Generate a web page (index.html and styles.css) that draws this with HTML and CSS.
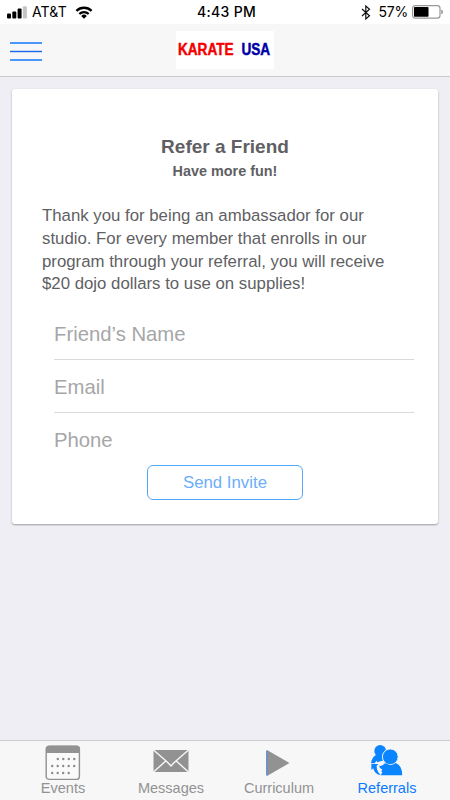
FILE: index.html
```html
<!DOCTYPE html>
<html lang="en">
<head>
<meta charset="utf-8">
<title>Refer a Friend</title>
<link rel="stylesheet" href="styles.css">
</head>
<body>
<div class="app">
  <header class="status">
    <div class="status-left">
      <svg class="signal" width="20" height="14" viewBox="0 0 20 14"><rect x="0" y="8.5" width="4" height="5" rx="1"/><rect x="5.3" y="6.5" width="4" height="7" rx="1"/><rect x="10.6" y="3.5" width="4" height="10" rx="1"/><rect x="15.9" y="1.3" width="4" height="12.2" rx="1" fill="#c4c4c4"/></svg>
      <span class="carrier">AT&amp;T</span>
      <svg width="18" height="13" viewBox="0 0 18 13" fill="none" stroke="#000" stroke-width="2.3"><path d="M1.4 4.9a10.8 10.8 0 0 1 15.2 0M4.3 8a6.7 6.7 0 0 1 9.4 0"/><path d="M6.2 9.9a4 4 0 0 1 5.6 0L9 12.7z" fill="#000" stroke="none"/></svg>
    </div>
    <span class="time">4:43 PM</span>
    <div class="status-right">
      <svg width="10" height="15" viewBox="0 0 10 15" fill="none" stroke="#111" stroke-width="1.2"><path d="M1 4l7.5 6.8L4.8 14V1l3.7 3.2L1 11"/></svg>
      <span class="percent">57%</span>
      <svg width="31" height="14" viewBox="0 0 31 14"><rect x=".6" y=".6" width="27.4" height="12.6" rx="2.6" fill="#fff" stroke="#999" stroke-width="1.2"/><rect x="2" y="2" width="14.5" height="9.7" rx=".8"/><path d="M29.3 4.6q1.6.5 1.6 2.4t-1.6 2.4z" fill="#888"/></svg>
    </div>
  </header>
  <nav class="navbar">
    <svg class="menu" width="32" height="20" viewBox="0 0 32 20"><path d="M0 1h32M0 18h32" stroke="#4a96fb" stroke-width="2"/><path d="M0 9.5h32" stroke="#1767e8" stroke-width="1.4"/></svg>
    <div class="logo">
      <svg width="98" height="38" viewBox="0 0 98 38"><text class="logo-text" transform="translate(2 24.4) scale(.8 1)" fill="#f50000" stroke="#f50000">KARATE</text><text class="logo-text" transform="translate(65.5 24.4) scale(.8 1)" fill="#0000a8" stroke="#0000a8">USA</text></svg>
    </div>
  </nav>
  <main class="content">
    <section class="card">
      <h1>Refer a Friend</h1>
      <h2>Have more fun!</h2>
      <p>Thank you for being an ambassador for our<br>studio. For every member that enrolls in our<br>program through your referral, you will receive<br>$20 dojo dollars to use on supplies!</p>
      <div class="fields">
        <div class="field">Friend’s Name</div>
        <div class="field">Email</div>
        <div class="field">Phone</div>
      </div>
      <button class="send">Send Invite</button>
    </section>
  </main>
  <footer class="tabs">
    <div class="tab">
      <svg width="36" height="36" viewBox="0 0 36 36"><rect x="1.2" y="1.2" width="33.2" height="33.2" rx="3" fill="#fafafa" stroke="#929292" stroke-width="1.4"/><path d="M1 8V4q0-3.2 3.2-3.2h27.4q3.2 0 3.2 3.2v4z" fill="#929292"/><path d="M12.8 14h18M7.2 21h24M7.2 28h18" stroke="#8b8b8b" stroke-width="2.4" stroke-linecap="round" stroke-dasharray="0 5.5"/></svg>
      <span>Events</span>
    </div>
    <div class="tab">
      <svg width="36" height="36" viewBox="0 0 36 36"><rect x=".5" y="5" width="35" height="22" fill="#929292"/><path d="M.5 5l14 12.2L18 21l3.5-3.8L35.5 5M.5 27l12.5-11.2M35.5 27L23 15.8" fill="none" stroke="#f8f8f8" stroke-width="1.4"/></svg>
      <span>Messages</span>
    </div>
    <div class="tab">
      <svg width="36" height="36" viewBox="0 0 36 36"><path d="M6 5l22.5 13L6 31z" fill="#929292"/><path d="M5.7 5.5v25" stroke="#3e7edb" stroke-width="1"/></svg>
      <span>Curriculum</span>
    </div>
    <div class="tab active">
      <svg width="36" height="36" viewBox="0 0 36 36" fill="#0a84ff"><circle cx="11.2" cy="6" r="5.9"/><path d="M6.5 10.2Q2.8 12.5 2 18.3l3.8-.1 1.6-2.4.8 1.4 6.8-2V10z"/><circle cx="21.3" cy="11.8" r="7.9" stroke="#f7f7f7" stroke-width="1"/><path d="M11.8 30.2l1.6-3.2-1.2-.8 1.1-1.8q-2.8-.8-3.4-3.6 3.2.8 5.8-2.3l1.4-.3Q21.5 21.8 26.8 18q6.4 2.4 6.4 12.2z"/><path d="M2.4 19h7l-1.8 2q.2 5.6 4.2 9.2-6-.6-7.6-6.9l-1.9 1.6z"/></svg>
      <span>Referrals</span>
    </div>
  </footer>
</div>
</body>
</html>
```

FILE: styles.css
```css
* { box-sizing: border-box; }
body { margin: 0; font-family: "Liberation Sans", Arial, sans-serif; }
svg { display: block; flex: none; }
.app { width: 450px; height: 800px; display: flex; flex-direction: column; background: #efeef4; }

.status { height: 24px; display: grid; grid-template-columns: 1fr auto 1fr; align-items: center; padding: 0 7px; background: #fff; font-family: Inter, sans-serif; font-size: 14px; line-height: 24px; color: #000; }
.status-left, .status-right { display: flex; align-items: center; }
.status-right { justify-content: flex-end; }
.carrier { margin: 0 8px 0 5px; letter-spacing: 0.15px; }
.time { margin: 0 0 0 3px; font-weight: 500; letter-spacing: 0.3px; }
.percent { margin: 0 4px 0 7px; letter-spacing: -0.2px; }

.navbar { height: 53px; display: grid; grid-template-columns: 1fr 98px 1fr; align-items: center; padding: 0 10px; background: #f7f7f7; border-bottom: 1px solid #cbcbcd; }
.menu { margin-top: 4px; }
.logo { width: 98px; height: 38px; background: #fff; }
.logo-text { font-size: 17px; font-weight: bold; stroke-width: 0.5px; }

.content { flex: 1; padding: 12px 12px 0; }
.card { height: 435px; padding: 46px 24px 0 30px; background: #fff; border-radius: 3px; box-shadow: 0 1px 2px rgba(0, 0, 0, 0.35); color: #5f5f64; display: flex; flex-direction: column; }
h1, h2 { margin: 0 6px 0 0; text-align: center; font-weight: bold; }
h1 { font-size: 19px; line-height: 24px; }
h2 { font-size: 14.4px; line-height: 24px; }
p { margin: 22px 0 0; font-size: 16.8px; line-height: 22.8px; white-space: nowrap; }
.fields { margin: 11px 0 0 12px; }
.field { height: 53px; padding-top: 2px; font-size: 20.3px; line-height: 50px; color: #a6a6a8; border-bottom: 1px solid #d9d9db; }
.field:last-child { height: 52px; border: 0; }
.send { width: 156px; height: 35px; margin: 0 6px 0 0; padding: 0; align-self: center; background: #fff; border: 1px solid #54a7f7; border-radius: 6px; font-family: inherit; font-size: 16.8px; color: #6caefa; }

.tabs { height: 60px; display: grid; grid-template-columns: repeat(4, 108px); justify-content: center; padding-top: 4px; background: #f7f7f7; border-top: 1px solid #cdcccf; }
.tab { display: flex; flex-direction: column; align-items: center; font-size: 14.5px; line-height: 14px; color: #929292; }
.active { color: #0a7bff; }
```
